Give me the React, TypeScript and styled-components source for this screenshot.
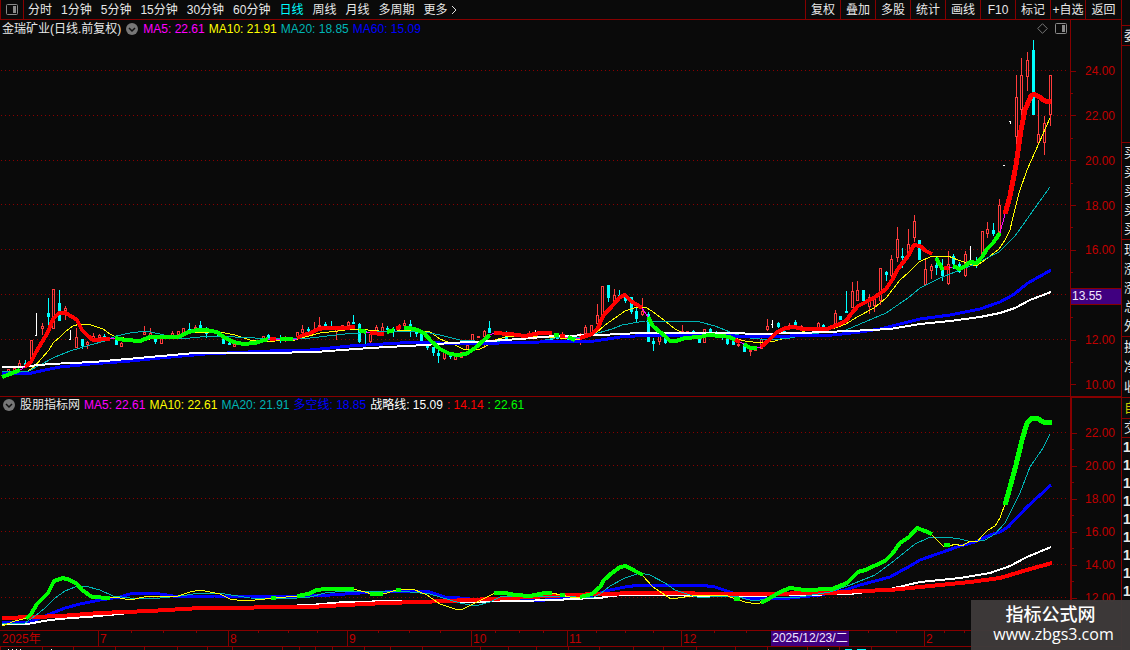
import React from "react";
import styled, { createGlobalStyle } from "styled-components";

const LINE = "#860000";
const LABEL = "#c00000";
const RED = "#ff0000";
const GREEN = "#00ff00";
const BLUE = "#0000ff";
const TEAL = "#00b4b4";
const YELLOW = "#ffff00";
const MAGENTA = "#ff00ff";
const UP = "#ff3c3c";
const DOWN = "#00ffff";

const Global = createGlobalStyle`
  * { box-sizing: border-box; }
  body {
    margin: 0;
    background: #0a0a0a;
    color: #e8e8e8;
    font: 12px/18px "Liberation Sans", "Noto Sans CJK SC", sans-serif;
  }
  button { font: inherit; color: inherit; background: none; border: 0; padding: 0; margin: 0; }
`;

const Screen = styled.div`
  position: relative;
  display: flex;
  min-height: 100vh;
  overflow: hidden;
`;
const Terminal = styled.main`
  flex: 1;
  min-width: 0;
  display: flex;
  flex-direction: column;
`;

const Toolbar = styled.nav`
  display: flex;
  height: 20px;
  border-bottom: 1px solid ${LINE};
  border-left: 1px solid ${LINE};
`;
const PanelToggle = styled.button`
  width: 23px;
  display: grid;
  place-items: center;
  border-right: 1px solid ${LINE};
`;
const Periods = styled.div`
  flex: 1;
  display: flex;
  gap: 9px;
  padding-left: 4px;
`;
const Period = styled.button<{ $active?: boolean }>`
  display: flex;
  align-items: center;
  white-space: nowrap;
  color: ${(p) => (p.$active ? "#00ffff" : "inherit")};
`;
const Tool = styled.button`
  width: 35px;
  border-left: 1px solid ${LINE};
  white-space: nowrap;
  &:last-child { width: 36px; }
`;

const Panel = styled.section`
  display: flex;
  border-bottom: 1px solid ${LINE};
`;
const PanelBody = styled.div`
  flex: 1;
  min-width: 0;
`;
const Info = styled.header<{ $height: number }>`
  display: flex;
  align-items: center;
  height: ${(p) => p.$height}px;
  gap: 4px;
  padding: 0 0 2px 2px;
  white-space: nowrap;
`;
const Value = styled.span<{ $color?: string }>`
  color: ${(p) => p.$color ?? "inherit"};
`;
const Round = styled.button`
  display: grid;
  place-items: center;
  && { margin: 0 1px; }
`;
const Corner = styled.div`
  display: flex;
  align-items: center;
  gap: 7px;
  margin-left: auto;
  padding-right: 3px;
`;
const Plot = styled.svg<{ $height: number }>`
  display: block;
  width: 100%;
  height: ${(p) => p.$height}px;
  fill: none;
  stroke-linejoin: round;
  shape-rendering: crispEdges;
`;

const Scale = styled.div<{ $top: number; $bottom: number; $line: number }>`
  position: relative;
  width: 51px;
  display: flex;
  flex-direction: column;
  justify-content: space-between;
  padding: ${(p) => p.$top}px 0 ${(p) => p.$bottom}px;
  border-left: ${(p) => p.$line}px solid ${LINE};
  border-top: ${(p) => p.$line - 1}px solid ${LINE};
  color: ${LABEL};
`;
const Mark = styled.div<{ $tick: number }>`
  display: flex;
  align-items: center;
  justify-content: space-between;
  height: 14px;
  padding-right: 6px;
  &::before {
    content: "";
    width: ${(p) => p.$tick}px;
    height: 1px;
    background: ${LINE};
  }
`;
const Cursor = styled.div`
  position: absolute;
  top: 268px;
  left: 0;
  right: 0;
  height: 17px;
  padding-left: 1px;
  line-height: 15px;
  color: #f0e8ff;
  background: #400080;
  border-top: 1px solid ${LINE};
  border-bottom: 1px solid ${LINE};
`;

const TimeAxis = styled.div`
  position: relative;
  display: grid;
  grid-template-columns: 98fr 130fr 119fr 124fr 96fr 114fr 243fr 197fr;
  height: 16px;
  border-bottom: 1px solid ${LINE};
  color: ${LABEL};
  line-height: 16px;
`;
const Month = styled.div`
  padding-left: 2px;
  white-space: nowrap;
  & + & { border-left: 1px solid ${LINE}; padding-left: 1px; }
`;
const Ticks = styled.svg`
  position: absolute;
  inset: 0;
  width: 100%;
  height: 2px;
`;
const DateChip = styled.div`
  position: absolute;
  top: 0;
  left: 68.8%;
  height: 15px;
  padding: 0 1px;
  line-height: 15px;
  color: #f0e8ff;
  background: #400080;
  white-space: nowrap;
`;
const Footer = styled.svg`
  display: block;
  width: 100%;
  height: 3px;
  shape-rendering: crispEdges;
`;

const Side = styled.aside`
  width: 9px;
  height: 650px;
  overflow: hidden;
  border-left: 1px solid ${LINE};
  display: flex;
  flex-direction: column;
`;
const Block = styled.div<{ $height: number; $color?: string }>`
  flex: none;
  display: flex;
  flex-direction: column;
  justify-content: space-around;
  height: ${(p) => p.$height}px;
  padding-left: 2px;
  border-bottom: 1px solid ${LINE};
  color: ${(p) => p.$color ?? "inherit"};
  white-space: nowrap;
  font-size: 13px;
`;
const Trade = styled.div`
  flex: none;
  height: 18px;
  padding-left: 1px;
  font-size: 14px;
  font-weight: bold;
`;

const Watermark = styled.div`
  position: absolute;
  right: 0;
  bottom: 0;
  width: 159px;
  height: 50px;
  padding-top: 3px;
  text-align: center;
  color: #fff;
  background: rgba(62, 58, 58, 0.97);
  line-height: 21px;
`;
const SiteName = styled.div`
  font-family: "Noto Sans CJK SC", sans-serif;
  font-size: 18px;
  font-weight: 500;
`;
const SiteLink = styled.a`
  display: block;
  color: inherit;
  text-decoration: none;
  font-family: "Open Sans", "Noto Sans", sans-serif;
  font-size: 16px;
  padding-left: 6px;
`;

type Candle = [x: number, high: number, low: number, top: number, bottom: number, kind: "u" | "d" | "w"];

const candles: Candle[] = [
  [3, 371, 375, 371, 375, "u"], [8, 369, 372, 369, 372, "u"], [14, 367, 371, 368, 371, "u"],
  [19, 360, 367, 363, 367, "u"], [25, 360, 365, 363, 365, "d"], [31, 340, 363, 340, 363, "u"],
  [36, 313, 335, 335, 335, "w"], [42, 323, 335, 326, 329, "u"], [48, 298, 327, 313, 317, "d"],
  [53, 289, 329, 289, 329, "u"], [59, 290, 321, 303, 321, "d"], [65, 306, 320, 308, 311, "u"],
  [70, 330, 339, 339, 339, "w"], [76, 328, 348, 337, 348, "u"], [82, 339, 349, 339, 346, "d"],
  [87, 341, 349, 342, 345, "u"], [93, 333, 339, 336, 339, "u"], [99, 334, 338, 335, 338, "u"],
  [104, 334, 338, 336, 338, "d"], [116, 338, 345, 338, 345, "d"], [121, 342, 347, 343, 347, "u"],
  [144, 326, 335, 332, 335, "u"], [150, 328, 337, 333, 337, "u"], [155, 338, 344, 338, 342, "d"],
  [161, 338, 344, 338, 344, "u"], [172, 331, 336, 333, 336, "u"], [178, 331, 335, 331, 335, "u"],
  [183, 328, 333, 328, 333, "u"], [189, 323, 333, 329, 333, "d"], [195, 325, 330, 327, 330, "u"],
  [200, 321, 330, 325, 329, "d"], [206, 327, 338, 331, 334, "d"], [218, 331, 337, 333, 337, "d"],
  [223, 337, 344, 337, 344, "d"], [229, 342, 345, 343, 345, "d"], [234, 342, 347, 344, 347, "u"],
  [263, 336, 342, 336, 342, "u"], [268, 334, 339, 335, 339, "d"], [280, 335, 343, 338, 341, "d"],
  [285, 336, 342, 338, 341, "u"], [297, 332, 337, 332, 337, "u"], [302, 325, 333, 329, 333, "u"],
  [308, 327, 332, 329, 331, "d"], [314, 322, 331, 329, 331, "u"], [319, 317, 327, 325, 327, "u"],
  [325, 322, 326, 324, 326, "d"], [331, 321, 328, 326, 328, "d"], [336, 327, 340, 328, 332, "u"],
  [342, 325, 328, 325, 328, "u"], [348, 321, 326, 322, 326, "u"], [353, 315, 324, 322, 324, "d"],
  [359, 323, 343, 324, 342, "d"], [365, 330, 345, 331, 333, "d"], [370, 333, 344, 334, 342, "u"],
  [376, 325, 332, 327, 331, "u"], [382, 323, 332, 327, 332, "u"], [387, 326, 332, 328, 330, "d"],
  [393, 327, 337, 329, 331, "d"], [399, 324, 330, 326, 329, "u"], [404, 320, 327, 323, 326, "u"],
  [410, 320, 337, 324, 332, "d"], [416, 328, 337, 330, 334, "d"], [421, 330, 342, 334, 342, "d"],
  [427, 342, 350, 344, 348, "d"], [433, 347, 356, 347, 353, "d"], [438, 348, 363, 353, 356, "d"],
  [444, 352, 360, 352, 359, "u"], [450, 353, 359, 354, 357, "d"], [455, 355, 360, 356, 360, "u"],
  [461, 352, 358, 352, 358, "u"], [467, 345, 350, 345, 350, "u"], [472, 334, 342, 334, 342, "u"],
  [478, 336, 338, 336, 338, "u"], [484, 330, 348, 331, 337, "u"], [489, 321, 333, 328, 333, "d"],
  [506, 331, 339, 333, 339, "d"], [529, 331, 335, 333, 335, "u"], [535, 330, 334, 334, 334, "w"],
  [551, 337, 341, 338, 340, "d"], [557, 333, 339, 335, 339, "d"], [562, 332, 338, 334, 338, "u"],
  [568, 337, 341, 337, 340, "d"], [580, 333, 345, 338, 343, "u"], [585, 325, 334, 327, 334, "u"],
  [591, 325, 333, 325, 333, "u"], [597, 304, 325, 315, 324, "u"], [602, 286, 320, 286, 320, "u"],
  [608, 285, 302, 285, 298, "d"], [614, 289, 304, 295, 303, "u"], [619, 290, 300, 295, 298, "d"],
  [625, 293, 303, 297, 301, "d"], [631, 297, 314, 297, 312, "d"], [636, 307, 322, 311, 319, "d"],
  [642, 298, 316, 311, 315, "u"], [648, 312, 342, 314, 342, "d"], [653, 338, 351, 341, 344, "d"],
  [659, 335, 345, 336, 342, "u"], [665, 335, 344, 336, 343, "d"], [682, 325, 333, 331, 333, "u"],
  [687, 331, 334, 331, 334, "u"], [693, 330, 334, 331, 333, "d"], [699, 335, 343, 335, 343, "d"],
  [704, 329, 343, 329, 343, "u"], [710, 328, 332, 329, 332, "d"], [716, 331, 335, 332, 334, "d"],
  [722, 333, 340, 335, 338, "d"], [727, 335, 345, 335, 344, "d"], [733, 337, 345, 341, 345, "d"],
  [738, 342, 347, 344, 346, "u"], [744, 343, 352, 343, 352, "d"], [750, 347, 356, 350, 352, "u"],
  [755, 348, 351, 348, 351, "u"], [761, 335, 349, 339, 349, "u"], [767, 319, 331, 326, 330, "u"],
  [772, 320, 328, 324, 325, "w"], [778, 322, 328, 323, 327, "d"], [784, 330, 334, 331, 333, "d"],
  [789, 323, 330, 325, 328, "u"], [795, 320, 326, 322, 325, "d"], [801, 325, 330, 326, 329, "u"],
  [818, 322, 331, 323, 331, "u"], [823, 324, 328, 325, 328, "d"], [835, 310, 328, 313, 328, "u"],
  [840, 316, 320, 316, 320, "d"], [846, 291, 313, 311, 313, "d"], [852, 282, 308, 291, 308, "u"],
  [857, 281, 301, 290, 301, "u"], [863, 290, 301, 290, 301, "d"], [869, 294, 314, 297, 307, "u"],
  [874, 295, 312, 297, 306, "u"], [880, 268, 305, 268, 301, "u"], [886, 271, 281, 272, 275, "d"],
  [891, 255, 279, 259, 276, "u"], [897, 227, 262, 239, 258, "u"], [902, 248, 268, 256, 258, "d"],
  [908, 229, 256, 244, 256, "u"], [914, 215, 242, 221, 238, "u"], [919, 240, 260, 240, 260, "d"],
  [925, 259, 285, 269, 285, "u"], [931, 264, 279, 266, 271, "u"], [936, 257, 275, 265, 268, "d"],
  [942, 259, 281, 270, 276, "d"], [948, 251, 285, 264, 284, "u"], [953, 254, 269, 256, 264, "d"],
  [959, 262, 273, 264, 272, "d"], [965, 251, 277, 254, 276, "u"], [970, 246, 260, 260, 260, "w"],
  [976, 257, 268, 261, 265, "d"], [982, 231, 256, 231, 256, "u"], [987, 222, 238, 229, 234, "u"],
  [993, 223, 236, 230, 234, "d"], [999, 199, 233, 205, 232, "u"], [1004, 165, 166, 165, 166, "w"],
  [1010, 121, 124, 121, 122, "w"], [1016, 75, 152, 97, 137, "u"], [1021, 58, 123, 75, 110, "u"],
  [1027, 52, 91, 60, 77, "u"], [1033, 40, 115, 50, 115, "d"], [1038, 100, 143, 134, 143, "u"],
  [1044, 116, 155, 123, 143, "u"], [1050, 75, 126, 75, 115, "u"],
];

const priceWhite = "2,367 19,367 50,364 93,362 127,359 161,356 195,353 210,353 270,353 315,352 370,348 425,345 450,343 490,341 520,339 555,336 600,335 640,333 740,333 750,334 800,333 850,331 890,329 920,324 950,321 980,317 1000,313 1015,308 1030,300 1051,292";
const priceBlue = "2,373 27,374 45,370 60,367 90,364 130,361 160,358 205,354 270,351 310,350 350,346 400,343 430,342 450,344 500,343 540,342 595,341 620,337 650,335 690,335 735,336 760,337 790,336 833,335 860,332 880,329 900,324 920,319 950,315 980,309 1000,302 1013,295 1028,283 1051,270";
const priceYellow = "2,377 20,372 27,372 35,366 42,358 49,350 53,343 60,337 66,331 73,326 80,324 91,325 103,329 110,334 116,337 140,340 150,339 178,338 189,333 206,332 225,333 235,335 250,340 262,341 275,341 295,340 305,337 320,333 338,331 352,329 368,330 390,332 405,330 430,332 440,339 455,345 465,350 480,349 488,345 495,340 505,337 530,336 560,338 580,340 596,333 605,325 615,318 625,311 637,307 645,307 652,311 665,321 675,329 683,333 695,339 705,337 715,335 730,337 745,341 760,343 775,341 785,338 795,334 805,331 835,328 846,324 857,317 874,308 886,298 900,280 909,272 919,262 932,256 948,256 958,260 976,266 985,260 999,249 1005,240 1010,230 1013,217 1019,193 1027,170 1039,143 1050,118";
const priceTeal = "2,371 27,372 40,365 55,357 70,351 90,345 105,341 116,336 130,333 146,331 160,334 178,339 190,338 210,336 235,337 255,338 310,338 345,334 375,332 400,331 425,332 440,335 460,340 475,341 510,341 540,341 560,337 580,337 598,333 612,329 622,325 645,321 700,322 715,326 735,334 750,338 770,340 790,338 810,334 846,330 860,324 886,313 908,298 920,288 940,278 955,272 975,264 999,252 1015,236 1025,222 1037,205 1050,187";

const priceRising = [
  "25,367 31,362 36,352 42,342 48,332 53,319 59,313 66,313 77,320 82,330 88,336 93,340 110,339",
  "270,339 276,339", "297,338 303,335 311,333 318,329 325,328 345,328 355,327", "370,333 384,334",
  "396,328 401,327", "494,333 510,334 525,336 540,333 552,333", "560,336 565,336",
  "580,338 592,334 598,328 603,316 614,304 620,297 625,295 631,301 642,308", "735,340 740,342",
  "761,347 768,341 776,333 785,328 795,327 802,329 827,329 837,325 846,321 851,314 858,306 866,302 875,297 886,289 892,280 898,269 908,256 914,245 920,246 926,251 932,254",
  "944,268 949,268",
];
const priceSurge = "1005,214 1010,196 1016,165 1021,130 1025,110 1031,96 1034,94 1041,98 1045,101 1051,101";
const priceFalling = [
  "2,377 10,374 20,370",
  "115,338 125,340 140,341 150,337 178,337 189,332 197,330 206,330 217,332 225,338 234,342 243,344 255,343 268,339",
  "280,339 293,339", "359,330 366,332", "387,332 394,330",
  "404,328 410,328 417,330 424,333 431,341 440,349 450,354 458,355 466,354 475,348 484,340 490,335",
  "554,335 559,335", "568,337 575,340",
  "648,317 653,326 660,332 665,336 670,341 676,341 685,338 700,337 708,335 722,336 730,337 735,340",
  "744,344 750,348 757,348", "936,258 943,270",
  "953,266 960,269 965,266 970,262 977,263 982,257 987,249 993,243 1000,233",
];
const priceLinks = [
  "20,370 25,367", "110,338 115,338", "268,339 297,339", "366,332 370,333", "490,335 494,333", "565,337 568,337",
  "575,339 580,338", "642,308 648,317", "740,342 744,344", "757,348 761,347", "949,268 953,267", "1000,233 1005,214",
];

const studyRed = "2,618 35,617 60,616 100,613 150,611 200,608 310,607 345,605 385,603 420,602 470,600 510,598 550,596 570,595 600,594 640,593 750,594 830,593 860,591 890,590 910,588 940,585 970,582 1000,578 1020,572 1030,569 1052,563";
const studyWhite = "2,624 27,624 50,620 70,618 88,617 150,611 200,608 285,606 310,605 345,602 400,601 470,602 510,601 560,600 567,599 600,598 610,596 625,595 740,596 850,594 890,589 920,582 960,578 990,573 1010,566 1027,557 1051,547";
const studyBlue = "2,622 30,622 50,614 65,608 80,604 100,600 120,597 130,594 140,593 160,594 180,597 215,596 250,596 290,597 330,595 360,593 385,592 410,591 430,592 445,597 460,598 480,600 520,601 545,600 560,599 590,596 610,590 625,587 640,585 700,585 715,587 730,592 745,598 757,599 790,598 820,595 845,590 860,585 890,577 910,566 920,560 940,553 960,546 975,542 990,535 1000,532 1008,527 1027,507 1051,485";
const studyTeal = "2,624 25,623 35,616 45,608 55,598 65,591 75,587 85,586 100,590 113,596 130,598 160,598 180,596 200,593 225,594 250,598 285,599 310,597 325,593 345,591 385,591 410,592 430,594 440,597 460,603 475,606 490,602 500,597 520,596 560,596 592,598 600,594 610,586 625,578 640,573 650,575 665,583 675,590 690,595 700,598 720,596 735,596 750,600 760,600 770,598 800,597 830,592 850,585 875,575 890,564 900,556 915,544 928,538 945,537 960,539 972,542 985,540 995,534 1005,523 1020,493 1030,467 1043,448 1050,434";
const studyYellow = [
  "2,626 15,621 27,618",
  "108,598 115,597 125,599 135,599 148,596 178,596 190,592 200,590 210,592 220,594 230,599 243,601 255,600 275,598 297,596",
  "353,589 365,592 372,594 387,593 393,591 402,589 415,590 427,595 440,604 455,609 463,609 475,603 485,598 495,593",
  "552,593 570,597 581,597",
  "643,576 653,587 662,593 671,599 685,597 700,595 725,595 733,598 745,602 757,604 763,602",
  "931,534 937,540 943,546 950,546 955,544 962,546 970,541 977,542 983,535 988,530 995,526 1000,518 1005,504",
];
const studyStrong = [
  "26,619 31,614 37,604 48,593 54,581 63,578 70,580 77,584 82,590 92,597 110,598", "271,598 276,598",
  "297,596 308,594 317,590 325,589 354,589", "370,594 383,594", "396,590 401,590",
  "494,593 505,593 515,595 530,596 545,593 552,593", "560,595 565,595",
  "580,597 592,594 600,587 604,580 612,573 620,567 626,566 635,571 643,575", "734,599 740,599",
  "761,603 770,598 780,592 790,588 805,590 832,589 847,583 858,572 865,570 885,561 892,554 900,543 909,537 917,528 925,531 932,534",
  "944,545 950,545",
];
const studySurge = "1005,505 1010,487 1016,465 1022,440 1027,423 1032,418 1037,418 1043,422 1052,422";

const Lines = ({ runs, color, width = 1 }: { runs: string[]; color: string; width?: number }) => (
  <g stroke={color} strokeWidth={width}>
    {runs.map((points) => <polyline key={points} points={points} />)}
  </g>
);

const Grid = ({ rows }: { rows: number[] }) => (
  <g stroke="#8a0000" strokeDasharray="1 3">
    {rows.map((y) => <path key={y} d={`M1 ${y}.5H1067`} />)}
  </g>
);

const Candles = () => (
  <g>
    {candles.map(([x, high, low, top, bottom, kind]) => {
      const c = x + 0.5;
      if (kind === "u") {
        return (
          <path key={x} stroke={UP}
            d={`M${c} ${high}V${top}M${c} ${bottom}V${low}M${x - 0.5} ${top + 0.5}h2V${bottom - 0.5}h-2z`} />
        );
      }
      if (kind === "d") {
        return (
          <g key={x} fill={DOWN}>
            <rect x={x} y={high} width={1} height={low - high} />
            <rect x={x - 1} y={top} width={3} height={bottom - top} />
          </g>
        );
      }
      return (
        <path key={x} stroke="#fff" d={`M${c} ${high}V${low}M${x - 1} ${top + 0.5}h2`} />
      );
    })}
  </g>
);

const ChevronBadge = ({ label }: { label: string }) => (
  <Round aria-label={label}>
    <svg width="12" height="12" viewBox="0 0 12 12">
      <circle cx="6" cy="6" r="6" fill="#777" />
      <path d="M3 5l3 3 3-3" fill="none" stroke="#111" strokeWidth="1.5" />
    </svg>
  </Round>
);

const PanelIcon = () => (
  <svg width="12" height="11" viewBox="0 0 12 11">
    <rect x="0.5" y="0.5" width="11" height="10" rx="1" fill="none" stroke="#8a8a8a" />
    <rect x="7" y="2" width="3" height="7" fill="#8a8a8a" />
  </svg>
);

const periods = ["分时", "1分钟", "5分钟", "15分钟", "30分钟", "60分钟", "日线", "周线", "月线", "多周期"];
const tools = ["复权", "叠加", "多股", "统计", "画线", "F10", "标记", "+自选", "返回"];
const priceMarks = ["24.00", "22.00", "20.00", "18.00", "16.00", "", "12.00", "10.00"];
const studyMarks = ["22.00", "20.00", "18.00", "16.00", "14.00", "12.00"];
const months = ["2025年", "7", "8", "9", "10", "11", "12", "2"];
const weekTicks = [131, 163, 196, 258, 288, 317, 378, 409, 440, 495, 519, 543, 596, 625, 653, 714, 746, 868, 896, 944, 964];
const tabEdges = [
  0, 42, 73, 115, 144, 177, 207, 232, 282, 299, 315, 332, 364, 390, 422, 480, 508, 536, 568, 599, 633, 663, 696,
  735, 767, 807, 839, 871,
];

const Marks = ({ values }: { values: string[] }) => (
  <>
    {values.map((v, i) => (
      <React.Fragment key={i}>
        {i > 0 && <Mark $tick={2} />}
        <Mark $tick={5}>{v}</Mark>
      </React.Fragment>
    ))}
  </>
);

export default function App() {
  return (
    <Screen>
      <Global />
      <Terminal>
        <Toolbar>
          <PanelToggle aria-label="侧栏"><PanelIcon /></PanelToggle>
          <Periods>
            {periods.map((p) => <Period key={p} $active={p === "日线"}>{p}</Period>)}
            <Period>
              更多
              <svg width="10" height="10" viewBox="0 0 10 10">
                <path d="M4 1l4 4-4 4" fill="none" stroke="#ddd" />
              </svg>
            </Period>
          </Periods>
          {tools.map((t) => <Tool key={t}>{t}</Tool>)}
        </Toolbar>

        <Panel>
          <PanelBody>
            <Info $height={19}>
              <Value>金瑞矿业(日线.前复权)</Value>
              <ChevronBadge label="主图指标" />
              <Value $color={MAGENTA}>MA5: 22.61</Value>
              <Value $color={YELLOW}>MA10: 21.91</Value>
              <Value $color={TEAL}>MA20: 18.85</Value>
              <Value $color={BLUE}>MA60: 15.09</Value>
              <Corner>
                <svg width="11" height="11" viewBox="0 0 11 11">
                  <path d="M5.500 .7L10.300 5.500 5.500 10.300 .7 5.500z" fill="none" stroke="#777" />
                </svg>
                <PanelIcon />
              </Corner>
            </Info>
            <Plot $height={357} viewBox="0 39 1070 357" preserveAspectRatio="none">
              <Grid rows={[70, 115, 160, 204, 249, 294, 339]} />
              <Candles />
              <Lines runs={[priceYellow]} color={YELLOW} />
              <Lines runs={[priceTeal]} color={TEAL} />
              <Lines runs={[priceBlue]} color={BLUE} width={3} />
              <Lines runs={[priceWhite]} color="#fff" width={2} />
              <Lines runs={priceLinks} color={MAGENTA} />
              <Lines runs={priceRising} color={RED} width={4} />
              <Lines runs={[priceSurge]} color={RED} width={5} />
              <Lines runs={priceFalling} color={GREEN} width={4} />
            </Plot>
          </PanelBody>
          <Scale $top={44} $bottom={4} $line={1}>
            <Marks values={priceMarks} />
            <Cursor>13.55</Cursor>
          </Scale>
        </Panel>

        <Panel>
          <PanelBody>
            <Info $height={18}>
              <ChevronBadge label="副图指标" />
              <Value>股朋指标网</Value>
              <Value $color={MAGENTA}>MA5: 22.61</Value>
              <Value $color={YELLOW}>MA10: 22.61</Value>
              <Value $color={TEAL}>MA20: 21.91</Value>
              <Value $color={BLUE}>多空线: 18.85</Value>
              <Value $color="#fff">战略线: 15.09</Value>
              <Value $color={RED}>: 14.14</Value>
              <Value $color={GREEN}>: 22.61</Value>
            </Info>
            <Plot $height={215} viewBox="0 415 1070 215" preserveAspectRatio="none">
              <Grid rows={[432, 465, 498, 531, 564, 597]} />
              <Lines runs={[studyBlue]} color={BLUE} width={3} />
              <Lines runs={[studyWhite]} color="#fff" width={2} />
              <Lines runs={[studyRed]} color={RED} width={4} />
              <Lines runs={[studyTeal]} color={TEAL} />
              <Lines runs={studyYellow} color={YELLOW} />
              <Lines runs={studyStrong} color={GREEN} width={4} />
              <Lines runs={[studySurge]} color={GREEN} width={5} />
            </Plot>
          </PanelBody>
          <Scale $top={28} $bottom={25} $line={2}>
            <Marks values={studyMarks} />
          </Scale>
        </Panel>

        <TimeAxis>
          {months.map((m) => <Month key={m}>{m}</Month>)}
          <Ticks viewBox="0 0 1121 2" preserveAspectRatio="none">
            {weekTicks.map((x) => <rect key={x} x={x} y={0} width={1} height={2} fill={LINE} />)}
          </Ticks>
          <DateChip>2025/12/23/二</DateChip>
        </TimeAxis>
        <Footer viewBox="0 0 1121 3" preserveAspectRatio="none">
          {tabEdges.map((x) => <rect key={x} x={x} y={0} width={1} height={3} fill={LINE} />)}
          {[8, 12, 16, 20, 51, 828].map((x) => <rect key={x} x={x} y={2} width={1} height={1} fill="#fff" />)}
          <rect x={845} y={2} width={7} height={1} fill={DOWN} />
          <rect x={857} y={2} width={9} height={1} fill={DOWN} />
        </Footer>
      </Terminal>

      <Side>
        <Block $height={26} />
        <Block $height={20}>委</Block>
        <Block $height={97} />
        <Block $height={97}>
          {[5, 4, 3, 2, 1].map((n) => <span key={n}>买</span>)}
        </Block>
        <Block $height={97}>
          {[..."现涨涨总外"].map((c, i) => <span key={i}>{c}</span>)}
        </Block>
        <Block $height={61}>
          {[..."换净收"].map((c) => <span key={c}>{c}</span>)}
        </Block>
        <Block $height={21} $color="#c8c800">自</Block>
        <Block $height={19}>交</Block>
        {Array.from({ length: 9 }, (_, i) => <Trade key={i}>1</Trade>)}
      </Side>

      <Watermark>
        <SiteName>指标公式网</SiteName>
        <SiteLink href="#">www.zbgs3.com</SiteLink>
      </Watermark>
    </Screen>
  );
}
